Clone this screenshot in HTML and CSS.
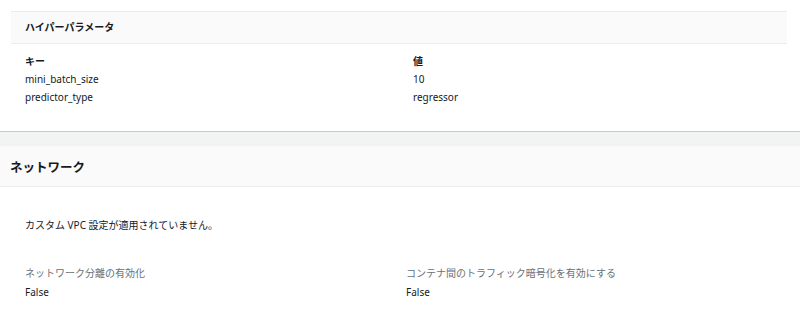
FILE: index.html
```html
<!DOCTYPE html>
<html lang="ja">
<head>
<meta charset="utf-8">
<link rel="stylesheet" href="styles.css">
</head>
<body>
<div class="hp">
  <div class="hp-panel">
    <div class="hp-head">ハイパーパラメータ</div>
    <div class="hp-table">
      <div class="th">キー</div><div class="th">値</div>
      <div class="td">mini_batch_size</div><div class="td">10</div>
      <div class="td">predictor_type</div><div class="td">regressor</div>
    </div>
  </div>
</div>
<div class="band"></div>
<div class="net">
  <div class="net-head">ネットワーク</div>
  <div class="net-body">
    <p class="note">カスタム VPC 設定が適用されていません。</p>
    <div class="fields">
      <div class="field">
        <div class="label">ネットワーク分離の有効化</div>
        <div class="value">False</div>
      </div>
      <div class="field">
        <div class="label">コンテナ間のトラフィック暗号化を有効にする</div>
        <div class="value">False</div>
      </div>
    </div>
  </div>
</div>
</body>
</html>
```
FILE: styles.css
```css
html, body {
  margin: 0;
  padding: 0;
  background: #ffffff;
}
body {
  font-family: "Noto Sans", "Noto Sans CJK JP", sans-serif;
  font-size: 10px;
  color: #16191f;
  width: 800px;
  height: 332px;
  overflow: hidden;
}
.hp {
  padding: 11px 13px 0 11px;
  height: 120px;
}
.hp-head {
  height: 28px;
  padding-bottom: 3px;
  background: #fafafa;
  border-top: 1px solid #eaeded;
  border-bottom: 1px solid #eaeded;
  display: flex;
  align-items: center;
  padding-left: 14px;
  font-weight: 700;
}
.hp-table {
  display: grid;
  grid-template-columns: 388px 1fr;
  padding: 9px 14px 0;
  row-gap: 2px;
}
.th {
  font-weight: 700;
  line-height: 16px;
}
.td {
  line-height: 16px;
}
.band {
  height: 14px;
  background: #f2f3f3;
  border-top: 1px solid #c6cccc;
}
.net-head {
  height: 40px;
  background: #fafafa;
  border-bottom: 1px solid #eaeded;
  display: flex;
  align-items: center;
  padding-left: 10px;
  font-weight: 700;
  font-size: 12.5px;
}
.net-body {
  padding: 30px 25px 0;
}
.note {
  margin: 0;
  line-height: 16px;
}
.fields {
  display: grid;
  grid-template-columns: 381px 1fr;
  margin-top: 32px;
}
.label {
  color: #687078;
  line-height: 16px;
}
.value {
  line-height: 16px;
  margin-top: 3px;
}
```
